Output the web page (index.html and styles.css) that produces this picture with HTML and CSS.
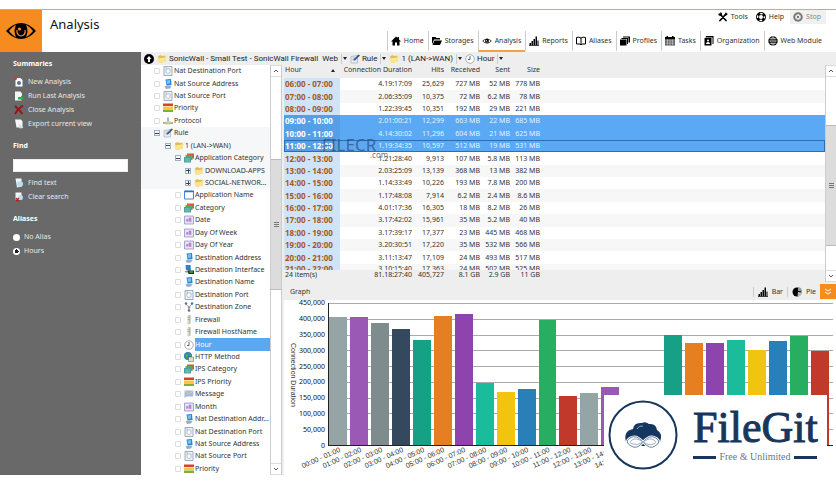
FILE: index.html
```html
<!DOCTYPE html>
<html lang="en">
<head>
<meta charset="utf-8">
<title>Analysis</title>
<link rel="stylesheet" href="styles.css">
</head>
<body>
<svg class="sprite" aria-hidden="true">
  <symbol id="eye" viewBox="0 0 32 20"><path d="M1 10Q16-6 31 10Q16 26 1 10Z"/><path d="M4 10Q8 5 11 4Q8 10 11 16Q8 15 4 10ZM28 10Q24 5 21 4Q24 10 21 16Q24 15 28 10Z" fill="var(--eye-bg,#fff)"/><path d="M12 9Q11 14 16 15Q21 14 20 9" fill="none" stroke="var(--eye-bg,#fff)" stroke-width="1.200"/><circle cx="14.500" cy="8" r="1.600" fill="var(--eye-bg,#fff)"/></symbol>
  <symbol id="home" viewBox="0 0 20 20"><path d="M10 1L0 11h3v8h5v-6h4v6h5v-8h3L16 7V2h-3v2Z"/></symbol>
  <symbol id="storages" viewBox="0 0 20 20"><path d="M0 2h7l2 2h7v3H4L1 15H0ZM5 9h15l-4 9H1Z"/></symbol>
  <symbol id="bars" viewBox="0 0 20 20"><path d="M1 14h3v4H1ZM5 10h3v8H5ZM9 6h3v12H9ZM13 1h3v17h-3ZM17 9h2v9h-2ZM0 18h20v1.500H0Z"/></symbol>
  <symbol id="aliases" viewBox="0 0 20 20"><path d="M10 4Q6 1 1 3v13h7l2 2 2-2h7V3Q14 1 10 4ZM10 4v13" fill="none" stroke="#000" stroke-width="2"/></symbol>
  <symbol id="profiles" viewBox="0 0 20 20"><path d="M0 7h13v12H0Z"/><path d="M3 6V4h13v12h-2V6ZM6 3V1h14v12h-3V3Z"/></symbol>
  <symbol id="tasks" viewBox="0 0 20 20"><path d="M0 3h20v16H0Z" fill="#555"/><path d="M0 2h20v4H0ZM3 0h3v3H3ZM14 0h3v3h-3Z"/><path d="M1 8.500h18M1 12h18M1 15.500h18M5 7v11M10 7v11M15 7v11" stroke="#ddd"/></symbol>
  <symbol id="organization" viewBox="0 0 20 20"><path d="M4 0h15v16h-2V3H3Z"/><path d="M1 4h14v15H1Z"/><circle cx="8" cy="9" r="2" fill="#fff"/><path d="M4 16q0-4 4-4t4 4Z" fill="#fff"/></symbol>
  <symbol id="globe" viewBox="0 0 20 20"><circle cx="10" cy="10" r="9.500"/><path d="M10 1v18M1 10h18M3 5h14M3 15h14M10 1Q1 10 10 19M10 1Q19 10 10 19" stroke="#fff" fill="none"/></symbol>
  <symbol id="tools" viewBox="0 0 20 20"><path d="M4 4l12 13M16 4L4 17" stroke="#000" stroke-width="3.500" stroke-linecap="round"/><path d="M0 3l4 2 1-5q4 2 3 6L5 8Q1 8 0 3ZM13 6l3-6 1 3 3 1-5 4Z"/></symbol>
  <symbol id="help" viewBox="0 0 20 20"><circle cx="10" cy="10" r="7" fill="none" stroke="#000" stroke-width="6"/><circle cx="10" cy="10" r="6.800" fill="none" stroke="#fff" stroke-width="3" stroke-dasharray="5 5.700" stroke-dashoffset="2.500"/></symbol>
  <symbol id="stop" viewBox="0 0 20 20"><circle cx="10" cy="10" r="9.500" fill="#777"/><circle cx="10" cy="10" r="5.500" fill="#eee"/><path d="M7.500 7.500l5 5M12.500 7.500l-5 5" stroke="#777" stroke-width="2"/></symbol>
  <symbol id="up" viewBox="0 0 20 20"><circle cx="10" cy="10" r="10"/><path d="M10 4l5 6h-3v6H8v-6H5Z" fill="#fff"/></symbol>
  <symbol id="pie" viewBox="0 0 20 20"><circle cx="10" cy="10" r="9"/><path d="M12 8V0a9 9 0 0 1 8 9l-8-1Z" fill="#999"/><path d="M12 10l8 1a9 9 0 0 1-9 8Z" fill="#bbb"/></symbol>
  <symbol id="folder" viewBox="0 0 20 20"><path d="M2 4l6-2 2 2 7-1v12L4 18Z" fill="#dcbf5c"/><path d="M0 9l16-2 4-2-3 10-13 3Z" fill="#f9e58c"/></symbol>
  <symbol id="port" viewBox="0 0 20 20"><path d="M2 1h16v18H2Z" fill="#eef2f6" stroke="#8296aa" stroke-width="1.500"/><path d="M6 6h8v7q-4 4-8 0Z" fill="#fff" stroke="#9fb0c0" stroke-width="1.500"/><path d="M5 4h3" stroke="#5577aa"/></symbol>
  <symbol id="address" viewBox="0 0 20 20"><path d="M5 1l11-1 1 12-10 1Z" fill="#2d80d8"/><path d="M7 3l7-1v7l-6 1Z" fill="#7cc0fa"/><path d="M3 15l5-2 9 1-3 5-8 1Z" fill="#9aaec4"/></symbol>
  <symbol id="interface" viewBox="0 0 20 20"><path d="M3 0h10l1 10H4Z" fill="#2d80d8"/><path d="M1 12l12-2v5H3Z" fill="#7f9cbc"/><path d="M7 11h13v7H9Z" fill="#173c17"/><path d="M11 14h7" stroke="#6fdc40" stroke-width="2"/></symbol>
  <symbol id="priority" viewBox="0 0 20 20"><path d="M0 1h20v5H0Z" fill="#dc402d"/><path d="M0 7h20v5H0Z" fill="#f6c83a"/><path d="M0 13h20v5H0Z" fill="#83ad35"/></symbol>
  <symbol id="protocol" viewBox="0 0 20 20"><path d="M8 3h4v8H8Z" fill="#a9b3c2"/><path d="M0 14h20" stroke="#8b939e" stroke-width="3"/><path d="M5 11h10v6H5Z" fill="#d7c979"/></symbol>
  <symbol id="rule" viewBox="0 0 20 20"><path d="M2 5l13-2v15H2Z" fill="#e8edf5" stroke="#8594ac"/><path d="M5 8h7M5 11h4" stroke="#6a84ab"/><path d="M7 14l1-4 9-9 3 2-9 9Z" fill="#3e557c"/></symbol>
  <symbol id="category" viewBox="0 0 20 20"><path d="M6 1h14v10H6Z" fill="#d9573d"/><path d="M3 4h14v10H3Z" fill="#4fae5d"/><path d="M0 8h14v11H0Z" fill="#48a1a0"/><path d="M2 12h10M2 16h10" stroke="#bfe6da"/></symbol>
  <symbol id="window" viewBox="0 0 20 20"><path d="M1 2h18v16H1Z" fill="#fff" stroke="#4388d2" stroke-width="2"/><path d="M1 3h18" stroke="#2f75c5" stroke-width="3"/></symbol>
  <symbol id="date" viewBox="0 0 20 20"><path d="M1 2h18v16H1Z" fill="#e6e3f6" stroke="#8d8cc4" stroke-width="1.500"/><path d="M5 13V9h3v4M10 13V6h4v8" fill="#c58acb" stroke="#9976bd"/></symbol>
  <symbol id="zone" viewBox="0 0 20 20"><path d="M4 4l6 7 6-7M10 11v7" fill="none" stroke="#7aa7cf" stroke-width="2"/><circle cx="4" cy="3" r="2.500" fill="#3f75b5"/><circle cx="16" cy="3" r="2.500" fill="#3f75b5"/><circle cx="10" cy="11" r="2.500" fill="#d87c55"/><circle cx="10" cy="17" r="2.500" fill="#3f75b5"/></symbol>
  <symbol id="firewall" viewBox="0 0 20 20"><path d="M8 1l5-1v17l-5 2Z" fill="#aaa99a"/><path d="M7 1h4v17H5l2-3Z" fill="#d9d8c8"/><path d="M7 5h4M7 9h4" stroke="#85857a"/></symbol>
  <symbol id="clock" viewBox="0 0 20 20"><circle cx="10" cy="10" r="8.500" fill="#fff" stroke="#8a97a5" stroke-width="1.500"/><path d="M10 4v7H6" fill="none" stroke="#333" stroke-width="1.500"/></symbol>
  <symbol id="http" viewBox="0 0 20 20"><circle cx="8" cy="8" r="8" fill="#2c7fb8"/><path d="M3 3q8 0 5 5T4 13ZM10 1l5 5-3 3Z" fill="#52ab4e"/><path d="M9 10h10v9H9Z" fill="#dbe2ca" stroke="#466a3a"/></symbol>
  <symbol id="message" viewBox="0 0 20 20"><path d="M1 3h18l-1 12H5l-4 3Z" fill="#a9b9cc"/><path d="M2 4l8 6 8-6" fill="none" stroke="#e4ebf3"/></symbol>
  <symbol id="new" viewBox="0 0 20 20"><path d="M3 2h10l4 4v13H3Z" fill="#fff"/><circle cx="10" cy="12" r="4" fill="#55739e"/><circle cx="3" cy="3" r="3" fill="#d33434"/></symbol>
  <symbol id="run" viewBox="0 0 20 20"><path d="M2 1h11l3 4v14H2Z" fill="#f4f6f6"/><path d="M8 12h6V9l6 5-6 6v-3H8Z" fill="#2fae42"/></symbol>
  <symbol id="close" viewBox="0 0 20 20"><path d="M2 2q7 6 15 16M18 1Q8 7 2 18" fill="none" stroke="#941717" stroke-width="4"/></symbol>
  <symbol id="export" viewBox="0 0 20 20"><path d="M2 1h12l3 4v12H5Z" fill="#f6f8f8"/><path d="M9 8l10 10-8 1Z" fill="#d7dfe5"/></symbol>
  <symbol id="find" viewBox="0 0 20 20"><path d="M3 1h12v16l-9 2Z" fill="#f3f6f8"/><circle cx="12" cy="12" r="6" fill="#bcdff0"/></symbol>
  <symbol id="clear" viewBox="0 0 20 20"><path d="M3 1h12v14H3Z" fill="#f3f6f8"/><circle cx="13" cy="11" r="5" fill="#bcdff0"/><path d="M4 12l6 7M10 12l-6 7" stroke="#b62323" stroke-width="2.500"/></symbol>
  <symbol id="chev-up" viewBox="0 0 10 10"><path d="M3 6l2-2 2 2" fill="none" stroke="#555"/></symbol>
  <symbol id="chev-down" viewBox="0 0 10 10"><path d="M3 4l2 2 2-2" fill="none" stroke="#555"/></symbol>
</svg>

<div class="app">
  <header class="top">
    <div class="brand"><svg><use href="#eye"/></svg></div>
    <h1>Analysis</h1>
    <div class="menus">
      <div class="utility">
        <button><svg class="icon"><use href="#tools"/></svg>Tools</button>
        <button><svg class="icon"><use href="#help"/></svg>Help</button>
        <button class="stop" disabled><svg class="icon"><use href="#stop"/></svg>Stop</button>
      </div>
      <nav>
        <a href="#"><svg class="icon"><use href="#home"/></svg>Home</a>
        <a href="#"><svg class="icon"><use href="#storages"/></svg>Storages</a>
        <a href="#" class="active"><svg class="icon"><use href="#eye"/></svg>Analysis</a>
        <a href="#"><svg class="icon"><use href="#bars"/></svg>Reports</a>
        <a href="#"><svg class="icon"><use href="#aliases"/></svg>Aliases</a>
        <a href="#"><svg class="icon"><use href="#profiles"/></svg>Profiles</a>
        <a href="#"><svg class="icon"><use href="#tasks"/></svg>Tasks</a>
        <a href="#"><svg class="icon"><use href="#organization"/></svg>Organization</a>
        <a href="#"><svg class="icon"><use href="#globe"/></svg>Web Module</a>
      </nav>
    </div>
  </header>

  <div class="body">
    <aside class="sidebar">
      <section>
        <h2>Summaries</h2>
        <button><svg class="icon"><use href="#new"/></svg>New Analysis</button>
        <button><svg class="icon"><use href="#run"/></svg>Run Last Analysis</button>
        <button><svg class="icon"><use href="#close"/></svg>Close Analysis</button>
        <button><svg class="icon"><use href="#export"/></svg>Export current view</button>
      </section>
      <section>
        <h2><label for="find-box">Find</label></h2>
        <input type="text" id="find-box">
        <button><svg class="icon"><use href="#find"/></svg>Find text</button>
        <button><svg class="icon"><use href="#clear"/></svg>Clear search</button>
      </section>
      <section>
        <h2>Aliases</h2>
        <label class="radio"><input type="radio" name="alias">No Alias</label>
        <label class="radio"><input type="radio" name="alias" checked>Hours</label>
      </section>
    </aside>

    <main>
      <div class="crumbs">
        <svg class="icon"><use href="#up"/></svg>
        <button><svg class="icon"><use href="#folder"/></svg>SonicWall - Small Test - SonicWall Firewall&nbsp; Web<i></i></button>
        <button><svg class="icon"><use href="#rule"/></svg>Rule<i></i></button>
        <button><svg class="icon"><use href="#folder"/></svg>1 (LAN-&gt;WAN)<i></i></button>
        <button><svg class="icon"><use href="#clock"/></svg>Hour<i></i></button>
      </div>
      <div class="panes">
        <div class="tree-pane">
          <ul class="tree" id="tree"></ul>
          <div class="scroll tree-scroll"><svg><use href="#chev-up"/></svg><div class="track"><div class="thumb"></div></div><svg><use href="#chev-down"/></svg></div>
        </div>
        <div class="content">
          <div class="grid-pane">
            <div class="grid-main">
              <table>
                <thead><tr><th>Hour<span class="sort"></span></th><th>Connection Duration</th><th>Hits</th><th>Received</th><th>Sent</th><th>Size</th></tr></thead>
                <tbody id="rows"></tbody>
                <tfoot><tr><td>24 item(s)</td><td>81.18:27:40</td><td>405,727</td><td>8.1 GB</td><td>2.9 GB</td><td>11 GB</td></tr></tfoot>
              </table>
              <div class="watermark">FILECR<small>.com</small></div>
            </div>
            <div class="scroll grid-scroll"><svg><use href="#chev-up"/></svg><div class="track"><div class="thumb"></div></div><svg><use href="#chev-down"/></svg></div>
          </div>
          <div class="graph-bar">
            <h2>Graph</h2>
            <button><svg class="icon"><use href="#bars"/></svg>Bar</button>
            <button><svg class="icon"><use href="#pie"/></svg>Pie</button>
            <button class="collapse" aria-label="Collapse"><svg viewBox="0 0 10 10"><path d="M2 2l3 2 3-2M2 5l3 2 3-2" fill="none" stroke="#fff"/></svg></button>
          </div>
          <div class="chart">
            <div class="axis-title">Connection Duration</div>
            <ol class="scale" id="scale"></ol>
            <div class="plot" id="plot"></div>
          </div>
        </div>
      </div>
    </main>
  </div>

  <div class="logo">
    <svg viewBox="0 0 70 70" fill="none">
      <circle cx="35" cy="35" r="33.500" stroke="#17365c" stroke-width="2"/>
      <path d="M18 42q-3-11 7-13 1-7 9-6 3-2 7 1 7-1 8 6 6 3 3 12l-5 4H22Z" fill="#14365f"/>
      <path d="M29 29q2-4 6-3" stroke="#8fa6c0"/>
      <path d="M35 42Q28 34 22 38T23 46Q29 50 35 42Q42 34 48 38T47 46Q42 50 35 42Z" fill="#fff" stroke="#fff" stroke-width="2.500"/>
      <path d="M35 42Q28 34 22 38T23 46Q29 50 35 42Q42 34 48 38T47 46Q42 50 35 42Z" stroke="#6f86a0"/>
      <path d="M35 42Q28 37 24 40T25 44Q29 46 35 42Q42 37 46 40T45 44Q42 46 35 42" stroke="#9fb0c4"/>
    </svg>
    <div class="wordmark"><strong>FileGit</strong><span>Free &amp; Unlimited</span></div>
  </div>
</div>
<script src="app.js"></script>
</body>
</html>
```
FILE: styles.css
```css
* { box-sizing: border-box; margin: 0; padding: 0; }
body { font: 7px/10px "Noto Sans", sans-serif; color: #333; background: #fff; }
button { font: inherit; color: inherit; background: none; border: 0; }
a { color: inherit; text-decoration: none; }
ul, ol { list-style: none; }
.sprite { position: absolute; width: 0; height: 0; }
.icon { width: 10px; height: 10px; flex: none; }

.app { min-height: 100vh; padding: 9px 0; display: flex; flex-direction: column; position: relative; overflow: hidden; }

.top { display: flex; height: 43px; border-top: 1px solid #7cc3d8; flex: none; }
.brand { width: 42px; background: #f68b1f; display: grid; place-items: center; --eye-bg: #f68b1f; }
.brand svg { width: 32px; height: 20px; }
h1 { font-size: 13px; line-height: 20px; font-weight: 400; color: #111; padding: 4px 8px; }
.menus { margin-left: auto; padding-right: 10px; display: flex; flex-direction: column; justify-content: space-between; align-items: flex-end; }
.utility { display: flex; gap: 4px; }
.utility button { display: flex; align-items: center; gap: 3px; height: 14px; padding: 0 2px; }
.utility .stop { background: #f0f0f0; color: #888; padding: 0 5px 0 3px; }
nav { display: flex; height: 21px; }
nav a { display: flex; align-items: center; gap: 3px; padding: 0 4px 0 3px; border-left: 1px solid #ccc; border-bottom: 2px solid transparent; }
nav .active { border-bottom-color: #f3a14c; }

.body { flex: 1; display: flex; }
.sidebar { width: 141px; flex: none; background: #696969; color: #e8e8e8; padding: 6px 13px; display: flex; flex-direction: column; gap: 9px; }
.sidebar h2 { font-size: 7px; line-height: 12px; color: #fff; margin-bottom: 5px; }
.sidebar button, .radio { display: flex; align-items: center; gap: 4px; height: 14px; }
.sidebar .icon { margin-left: 1px; }
.sidebar input[type="text"] { width: 100%; height: 13px; border: 1px solid #eee; background: #fff; display: block; margin: 7px 0 4px; font: inherit; }
.radio input { appearance: none; width: 7px; height: 7px; border-radius: 50%; background: #fff; }
.radio input:checked { background: radial-gradient(circle, #222 0 2px, #fff 2px); }

main { flex: 1; min-width: 0; display: flex; flex-direction: column; background: #eee; }
.crumbs { height: 13px; display: flex; align-items: center; padding-left: 3px; gap: 3px; font-family: Roboto, sans-serif; font-size: 8px; }
.crumbs button { display: flex; align-items: center; gap: 2px; color: #222; white-space: nowrap; }
.crumbs i { display: flex; align-items: center; height: 10px; border-left: 1px solid #ccc; margin-left: 1px; padding-left: 1px; }
.crumbs i::after { content: ""; border: 2px solid transparent; border-top: 3px solid #222; border-bottom: 0; }
.panes { flex: 1; display: flex; }

.tree-pane { width: 141px; flex: none; display: flex; background: #fff; border-right: 1px solid #ccc; }
.tree { flex: 1; min-width: 0; display: grid; grid-auto-rows: 1fr; }
.tree li { display: flex; align-items: center; padding-left: 13px; gap: 1px; white-space: nowrap; }
.tree .open { background: #f6f7f8; }
.tree .level1 { padding-left: 24px; }
.tree .level2 { padding-left: 34px; }
.tree .level3 { padding-left: 44px; }
.tree input { appearance: none; width: 6px; height: 6px; border: 1px solid #ddd; border-radius: 1px; margin-right: 2px; flex: none; }
.tree .toggle { width: 6px; height: 6px; border: 1px solid #9fb0c4; margin-right: 2px; flex: none; background: linear-gradient(#345, #345) center / 4px 1px no-repeat; }
.tree .plus { background: linear-gradient(#345, #345) center / 4px 1px no-repeat, linear-gradient(#345, #345) center / 1px 4px no-repeat; }
.tree span { flex: 1; min-width: 0; align-self: stretch; display: flex; align-items: center; }
.tree .current span { background: #5aa7f2; color: #fff; }

.scroll { width: 11px; flex: none; display: flex; flex-direction: column; background: #fff; border-left: 1px solid #ccc; }
.scroll > svg { width: 10px; height: 12px; flex: none; border: 1px solid #ddd; border-width: 1px 0; }
.track { flex: 1; display: flex; flex-direction: column; }
.thumb { background: linear-gradient(#777 0 1px, transparent 1px 2px, #777 2px 3px, transparent 3px 4px, #777 4px 5px) center / 5px 5px no-repeat, #dcdcdc; border: 1px solid #bbb; border-width: 1px 0; }
.track::before { content: ""; }
.tree-scroll .track::before { flex: 82; }
.tree-scroll .thumb { flex: 130; }
.tree-scroll .track::after { content: ""; flex: 174; }
.grid-scroll .track::before { flex: 48; }
.grid-scroll .thumb { flex: 121; }
.grid-scroll .track::after { content: ""; flex: 24; }

.content { flex: 1; min-width: 0; display: grid; grid-template-rows: minmax(0, 217fr) 18px minmax(0, 175fr); padding-left: 2px; }
.grid-pane { display: flex; min-height: 0; }
.grid-main { flex: 1; min-width: 0; position: relative; display: flex; }
table { flex: 1; display: grid; grid-template-rows: 13px minmax(0, 1fr) 12px; background: #eee; }
tbody { display: grid; grid-template-rows: repeat(15, minmax(0, 2fr)) minmax(0, 1fr); background: #fff; contain: size; }
tr { display: grid; grid-template-columns: 56px 72px 32px 36px 30px 30px 1fr; align-items: center; }
tbody tr:last-child { overflow: hidden; align-items: start; }
th, td { font-weight: 400; text-align: right; white-space: nowrap; }
th:first-child, td:first-child { text-align: left; padding-left: 1px; }
.sort { display: inline-block; border: 2px solid transparent; border-bottom: 3px solid #222; border-top: 0; margin-left: 29px; vertical-align: middle; }
tbody th { align-self: stretch; display: flex; align-items: center; background: #cfe4f8; color: #a5591c; font-size: 8px; font-weight: 700; }
tbody tr:last-child th { align-items: flex-start; }
tbody tr:nth-child(even) { background: #f7f7f7; }
tbody tr.selected { background: #5ba9f5; color: #e5f2ff; }
tbody tr.selected th { background: #559fe8; color: #fff; }
tbody tr.focus { outline: 1px solid #2f6dab; outline-offset: -1px; }
.watermark { position: absolute; left: 38px; top: 70px; font-size: 17px; line-height: 20px; color: rgba(45, 75, 110, .7); }
.watermark small { position: absolute; right: -12px; top: 14px; font-size: 8px; line-height: 12px; color: #777; }

.graph-bar { display: flex; align-items: center; padding: 2px 0 1px 6px; }
.graph-bar h2 { font-size: 7px; font-weight: 400; flex: 1; }
.graph-bar button { display: flex; align-items: center; gap: 4px; padding: 0 4px; border-left: 1px solid #ccc; }
.graph-bar .collapse { background: #f68b1f; width: 16px; height: 15px; border: 0; padding: 0; justify-content: center; }
.collapse svg { width: 10px; height: 10px; }

.chart { display: flex; background: #fff; padding: 3px 3px 29px 4px; min-height: 0; }
.axis-title { writing-mode: vertical-rl; text-align: center; width: 10px; font: 7px/10px "Liberation Sans", sans-serif; }
.scale { width: 30px; display: flex; flex-direction: column; justify-content: space-between; text-align: right; padding-right: 3px; color: #111; }
.scale li { height: 0; display: flex; align-items: center; justify-content: flex-end; }
.plot { flex: 1; display: flex; gap: 3px; align-items: flex-end; padding-right: 4px; border-left: 1px solid #222; border-bottom: 1px solid #222; background: repeating-linear-gradient(#aaa 0 1px, transparent 1px calc(100% / 9)); }
.col { flex: 1; height: 100%; display: flex; align-items: flex-end; position: relative; }
.bar { width: 100%; }
.col span { position: absolute; right: 50%; top: calc(100% + 1px); font: 7px/8px "Liberation Sans", sans-serif; white-space: nowrap; transform: rotate(-24deg); transform-origin: right top; }

.logo { position: absolute; right: 9px; bottom: 0; width: 223px; height: 89px; background: #fff; display: flex; align-items: flex-start; gap: 15px; padding: 5px 0 0 4px; }
.logo svg { width: 70px; height: 70px; flex: none; }
.wordmark { width: 124px; color: #17365c; padding-top: 4px; }
.wordmark strong { display: block; font: 44px/48px "Liberation Serif", serif; -webkit-text-stroke: 1px #17365c; }
.wordmark span { display: flex; align-items: center; gap: 3px; font: 10px/10px "Liberation Serif", serif; color: #6d7585; white-space: nowrap; }
.wordmark span::before, .wordmark span::after { content: ""; height: 3px; flex: 1; background: #17365c; }
```
FILE: app.js
```js
const icon = (name) => `<svg class="icon"><use href="#${name}"/></svg>`;

// level, icon, label, state
const nodes = [
  [0, "port", "Nat Destination Port"], [0, "address", "Nat Source Address"], [0, "port", "Nat Source Port"],
  [0, "priority", "Priority"], [0, "protocol", "Protocol"], [0, "rule", "Rule", "minus"],
  [1, "folder", "1 (LAN->WAN)", "minus"], [2, "category", "Application Category", "minus"],
  [3, "folder", "DOWNLOAD-APPS", "plus"], [3, "folder", "SOCIAL-NETWOR...", "plus"],
  [2, "window", "Application Name"], [2, "category", "Category"], [2, "date", "Date"], [2, "date", "Day Of Week"],
  [2, "date", "Day Of Year"], [2, "address", "Destination Address"], [2, "interface", "Destination Interface"],
  [2, "address", "Destination Name"], [2, "port", "Destination Port"], [2, "zone", "Destination Zone"],
  [2, "firewall", "Firewall"], [2, "firewall", "Firewall HostName"], [2, "clock", "Hour", "current"],
  [2, "http", "HTTP Method"], [2, "category", "IPS Category"], [2, "priority", "IPS Priority"],
  [2, "message", "Message"], [2, "date", "Month"], [2, "address", "Nat Destination Addr..."],
  [2, "port", "Nat Destination Port"], [2, "address", "Nat Source Address"], [2, "port", "Nat Source Port"],
  [2, "priority", "Priority"]
];
document.getElementById("tree").innerHTML = nodes.map(([level, name, label, state], i) => {
  const folds = state === "minus" || state === "plus";
  const control = folds
    ? `<button class="toggle ${state}" aria-label="Toggle ${label}"></button>`
    : `<input type="checkbox" id="node${i}" aria-label="${label}">`;
  return `<li class="level${level} ${folds ? "open" : state || ""}">${control}${icon(name)}<span>${label}</span></li>`;
}).join("");

const rows = [
  "06:00 - 07:00|4.19:17:09|25,629|727 MB|52 MB|778 MB",
  "07:00 - 08:00|2.06:35:09|10,375|72 MB|6.2 MB|78 MB",
  "08:00 - 09:00|1.22:39:45|10,351|192 MB|29 MB|221 MB",
  "09:00 - 10:00|2.01:00:21|12,299|663 MB|22 MB|685 MB",
  "10:00 - 11:00|4.14:30:02|11,296|604 MB|21 MB|625 MB",
  "11:00 - 12:00|1.19:34:35|10,597|512 MB|19 MB|531 MB",
  "12:00 - 13:00|1.21:28:40|9,913|107 MB|5.8 MB|113 MB",
  "13:00 - 14:00|2.03:25:09|13,139|368 MB|13 MB|382 MB",
  "14:00 - 15:00|1.14:33:49|10,226|193 MB|7.8 MB|200 MB",
  "15:00 - 16:00|1.17:48:08|7,914|6.2 MB|2.4 MB|8.6 MB",
  "16:00 - 17:00|4.01:17:36|16,305|18 MB|8.2 MB|26 MB",
  "17:00 - 18:00|3.17:42:02|15,961|35 MB|5.2 MB|40 MB",
  "18:00 - 19:00|3.17:39:17|17,377|23 MB|445 MB|468 MB",
  "19:00 - 20:00|3.20:30:51|17,220|35 MB|532 MB|566 MB",
  "20:00 - 21:00|3.11:13:47|17,109|24 MB|493 MB|517 MB",
  "21:00 - 22:00|3.10:15:40|17,363|24 MB|502 MB|525 MB"
];
document.getElementById("rows").innerHTML = rows.map((row, i) => {
  const [hour, ...cells] = row.split("|");
  const cls = (i > 2 && i < 6 ? "selected" : "") + (i === 5 ? " focus" : "");
  return `<tr class="${cls}"><th scope="row">${hour}</th>${cells.map((c) => `<td>${c}</td>`).join("")}</tr>`;
}).join("");

const max = 450;
document.getElementById("scale").innerHTML = Array.from({ length: 10 }, (_, i) => {
  const v = max - i * 50;
  return `<li>${v ? v + ",000" : "0"}</li>`;
}).join("");

const colors = ["#95a5a6", "#9b59b6", "#7f8c8d", "#34495e", "#16a085", "#e67e22", "#8e44ad", "#1abc9c", "#f1c40f", "#2980b9", "#27ae60", "#c0392b"];
const values = [407, 405, 388, 368, 334, 409, 415, 197, 168, 176, 397, 156, 164, 184, 130, 120, 350, 324, 324, 334, 301, 330, 347, 299];
const pad = (n) => String(n).padStart(2, "0") + ":00";
document.getElementById("plot").innerHTML = values.map((v, i) => {
  const label = i < 15 ? `<span>${pad(i)} - ${pad(i + 1)}</span>` : "";
  return `<div class="col"><div class="bar" style="height:${v / max * 100}%;background:${colors[i % 12]}"></div>${label}</div>`;
}).join("");
```
